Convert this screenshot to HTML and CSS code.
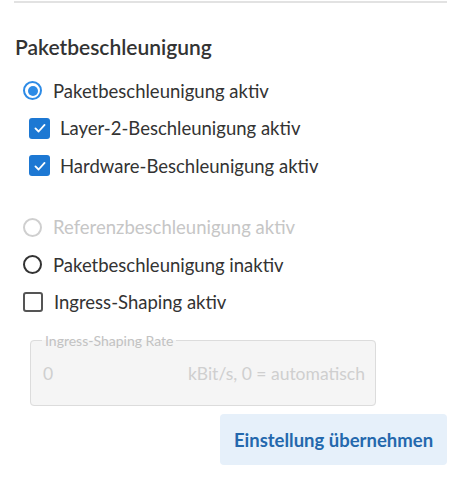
FILE: index.html
```html
<!DOCTYPE html>
<html lang="de">
<head>
  <meta charset="UTF-8">
  <meta name="viewport" content="width=device-width, initial-scale=1.0">
  <title>Paketbeschleunigung</title>
  <link rel="stylesheet" href="styles.css">
</head>
<body>
  <div class="page">
    <div class="divider"></div>
    <h2 class="title">Paketbeschleunigung</h2>

    <!-- Beschleunigung -->
    <div class="option">
      <span class="radio checked"></span>
      <span class="label">Paketbeschleunigung aktiv</span>
    </div>
    <div class="option sub">
      <span class="checkbox checked">
        <svg viewBox="0 0 20 20" width="14" height="14"><path d="M3.5 10.5 L8 15 L16.5 5.5" fill="none" stroke="#fff" stroke-width="2.6" stroke-linecap="round" stroke-linejoin="round"/></svg>
      </span>
      <span class="label">Layer-2-Beschleunigung aktiv</span>
    </div>
    <div class="option sub">
      <span class="checkbox checked">
        <svg viewBox="0 0 20 20" width="14" height="14"><path d="M3.5 10.5 L8 15 L16.5 5.5" fill="none" stroke="#fff" stroke-width="2.6" stroke-linecap="round" stroke-linejoin="round"/></svg>
      </span>
      <span class="label">Hardware-Beschleunigung aktiv</span>
    </div>

    <div class="option disabled gap">
      <span class="radio"></span>
      <span class="label">Referenzbeschleunigung aktiv</span>
    </div>
    <div class="option">
      <span class="radio"></span>
      <span class="label">Paketbeschleunigung inaktiv</span>
    </div>
    <div class="option">
      <span class="checkbox"></span>
      <span class="label">Ingress-Shaping aktiv</span>
    </div>

    <!-- Ingress-Shaping Rate -->
    <fieldset class="rate">
      <legend>Ingress-Shaping Rate</legend>
      <div class="rate-row">
        <span class="rate-value">0</span>
        <span class="rate-unit">kBit/s, 0 = automatisch</span>
      </div>
    </fieldset>

    <div class="actions">
      <button class="apply-button">Einstellung übernehmen</button>
    </div>
  </div>
</body>
</html>
```

FILE: styles.css
```css
body {
  margin: 0;
  font-family: Lato, "Open Sans", sans-serif;
  color: #333;
  background: #fff;
}

.page {
  padding: 0 14px 0 14px;
}

.divider {
  margin-top: 1px;
  border-top: 2px solid #e2e2e2;
}

.title {
  margin: 30px 0 0 1px;
  font-size: 21px;
  font-weight: 600;
  line-height: 28px;
  color: #333;
}

.option {
  display: flex;
  align-items: center;
  height: 37.5px;
  padding-left: 9px;
}

.title + .option {
  margin-top: 11px;
}

.option.sub {
  padding-left: 15px;
}

.option.gap {
  margin-top: 24px;
}

.label {
  font-size: 18.5px;
  margin-left: 11px;
}

.sub .label {
  margin-left: 10px;
}

.radio {
  width: 19px;
  height: 19px;
  box-sizing: border-box;
  border: 2px solid #333;
  border-radius: 50%;
  display: flex;
  align-items: center;
  justify-content: center;
}

.radio.checked {
  border-color: #2d8be6;
}

.radio.checked::after {
  content: "";
  width: 10px;
  height: 10px;
  border-radius: 50%;
  background: #2d8be6;
}

.checkbox {
  width: 20px;
  height: 20px;
  box-sizing: border-box;
  border: 2px solid #555;
  border-radius: 3px;
  display: flex;
  align-items: center;
  justify-content: center;
}

.checkbox.checked {
  width: 21px;
  height: 21px;
  border: none;
  background: #1d78d3;
}

.disabled .label {
  color: #c6c6c6;
}

.disabled .radio {
  border-color: #cfcfcf;
}

.rate {
  margin: 11px 71px 0 16px;
  padding: 6px 10px 13px 12px;
  border: 1px solid #dcdcdc;
  border-radius: 4px;
  background: #f5f5f5;
}

.rate legend {
  font-size: 14px;
  color: #c2c2c2;
  padding: 0 3px;
  margin-left: -1px;
}

.rate-row {
  display: flex;
  justify-content: space-between;
  align-items: center;
  height: 37px;
  font-size: 17.5px;
  color: #cfcfcf;
}

.actions {
  display: flex;
  justify-content: flex-end;
  margin-top: 8px;
}

.apply-button {
  width: 227px;
  height: 51px;
  border: none;
  border-radius: 4px;
  background: #e6f0fa;
  color: #2468ad;
  font-family: Lato, "Open Sans", sans-serif;
  font-size: 18.5px;
  font-weight: 700;
  cursor: pointer;
}
```
